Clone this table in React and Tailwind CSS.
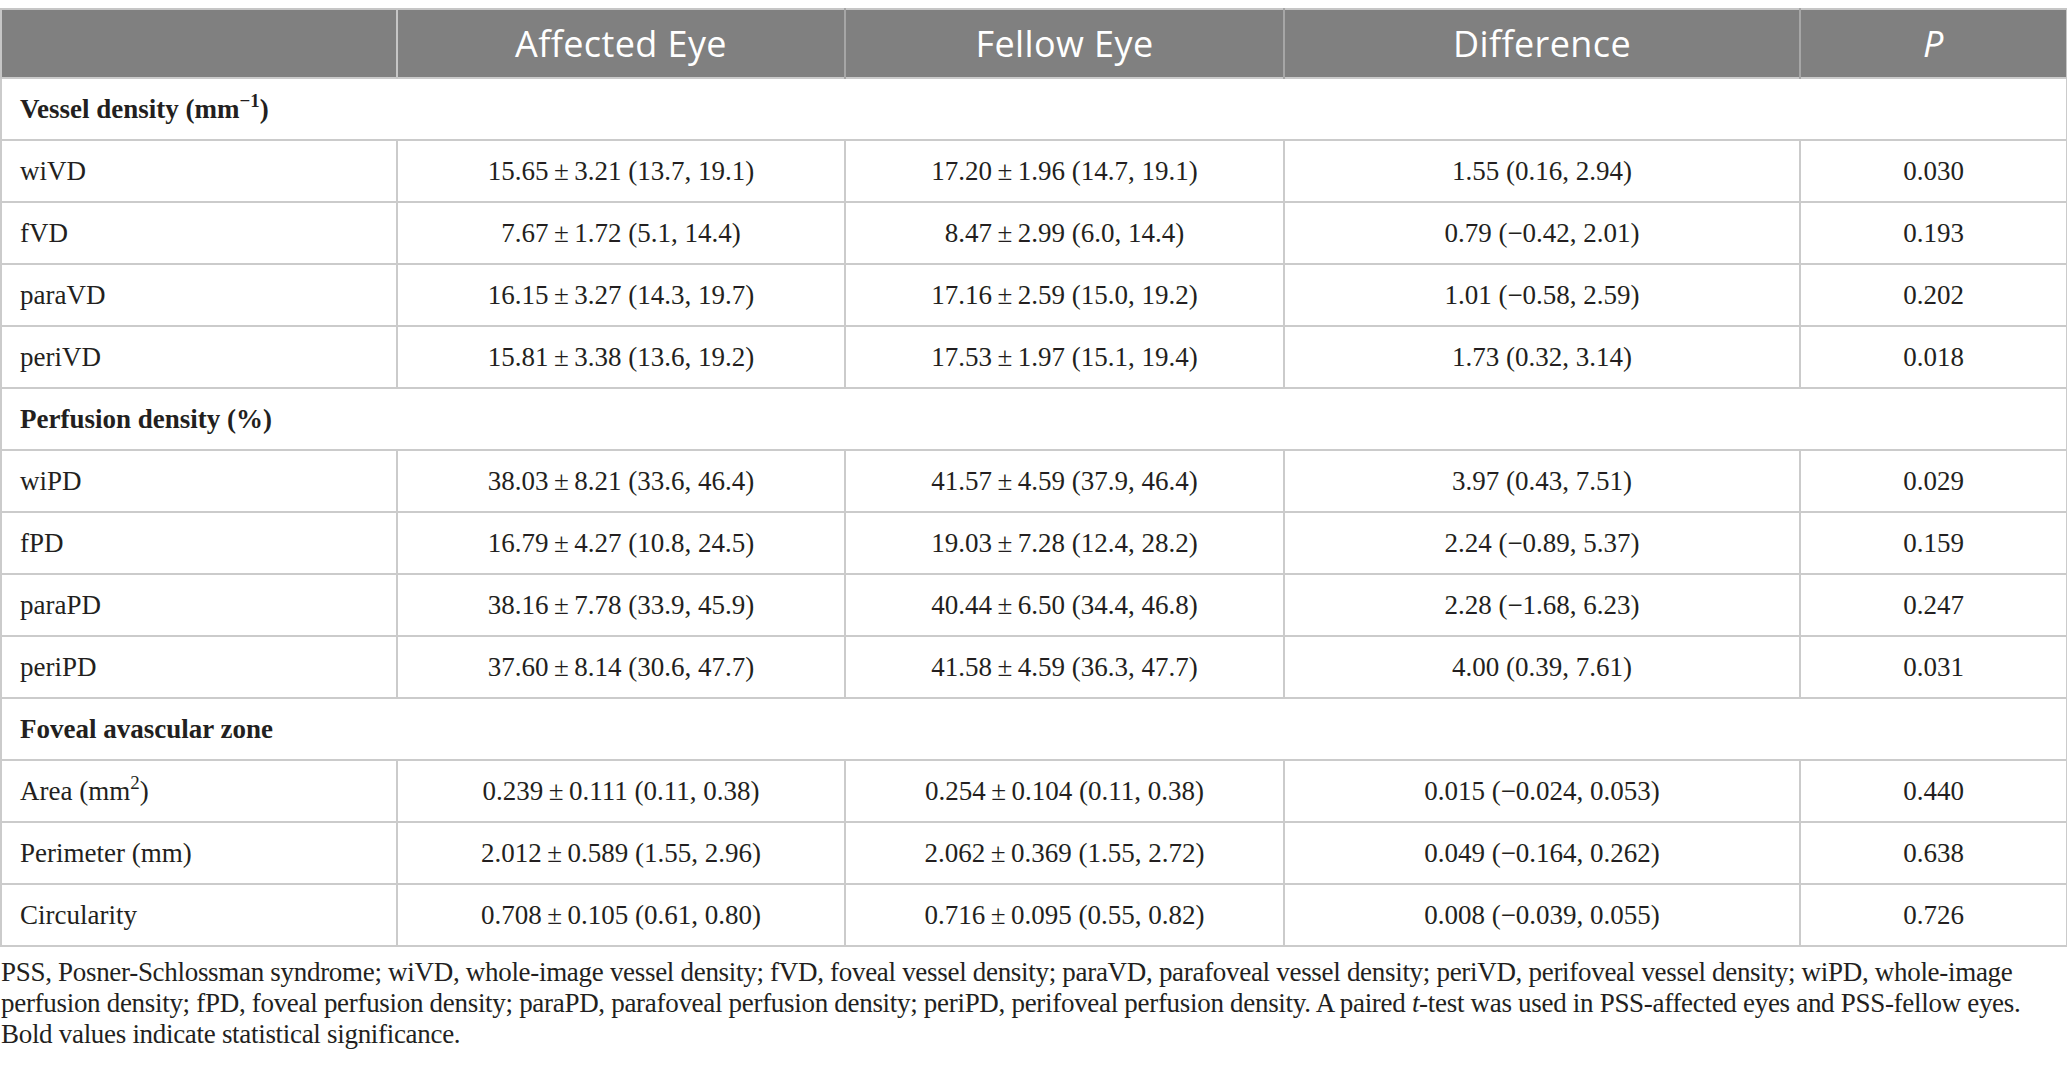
import React from "react";

const serif = { fontFamily: '"Liberation Serif", "Times New Roman", serif' };

const supCls = "text-[0.7em] relative -top-[0.55em] align-baseline";

const sections = [
  {
    title: (
      <>
        Vessel density (mm<sup className={supCls}>−1</sup>)
      </>
    ),
    rows: [
      ["wiVD", "15.65\u2009±\u20093.21 (13.7, 19.1)", "17.20\u2009±\u20091.96 (14.7, 19.1)", "1.55 (0.16, 2.94)", "0.030"],
      ["fVD", "7.67\u2009±\u20091.72 (5.1, 14.4)", "8.47\u2009±\u20092.99 (6.0, 14.4)", "0.79 (−0.42, 2.01)", "0.193"],
      ["paraVD", "16.15\u2009±\u20093.27 (14.3, 19.7)", "17.16\u2009±\u20092.59 (15.0, 19.2)", "1.01 (−0.58, 2.59)", "0.202"],
      ["periVD", "15.81\u2009±\u20093.38 (13.6, 19.2)", "17.53\u2009±\u20091.97 (15.1, 19.4)", "1.73 (0.32, 3.14)", "0.018"],
    ],
  },
  {
    title: <>Perfusion density (%)</>,
    rows: [
      ["wiPD", "38.03\u2009±\u20098.21 (33.6, 46.4)", "41.57\u2009±\u20094.59 (37.9, 46.4)", "3.97 (0.43, 7.51)", "0.029"],
      ["fPD", "16.79\u2009±\u20094.27 (10.8, 24.5)", "19.03\u2009±\u20097.28 (12.4, 28.2)", "2.24 (−0.89, 5.37)", "0.159"],
      ["paraPD", "38.16\u2009±\u20097.78 (33.9, 45.9)", "40.44\u2009±\u20096.50 (34.4, 46.8)", "2.28 (−1.68, 6.23)", "0.247"],
      ["periPD", "37.60\u2009±\u20098.14 (30.6, 47.7)", "41.58\u2009±\u20094.59 (36.3, 47.7)", "4.00 (0.39, 7.61)", "0.031"],
    ],
  },
  {
    title: <>Foveal avascular zone</>,
    rows: [
      [
        <>
          Area (mm<sup className={supCls}>2</sup>)
        </>,
        "0.239\u2009±\u20090.111 (0.11, 0.38)",
        "0.254\u2009±\u20090.104 (0.11, 0.38)",
        "0.015 (−0.024, 0.053)",
        "0.440",
      ],
      ["Perimeter (mm)", "2.012\u2009±\u20090.589 (1.55, 2.96)", "2.062\u2009±\u20090.369 (1.55, 2.72)", "0.049 (−0.164, 0.262)", "0.638"],
      ["Circularity", "0.708\u2009±\u20090.105 (0.61, 0.80)", "0.716\u2009±\u20090.095 (0.55, 0.82)", "0.008 (−0.039, 0.055)", "0.726"],
    ],
  },
];

export default function App() {
  return (
    <div className="w-[2067px] h-[1073px] bg-white text-[#231f20] overflow-hidden pt-[8px]" style={serif}>
      <table className="border-collapse table-fixed w-[2066px]">
        <colgroup>
          <col className="w-[396px]" />
          <col className="w-[448px]" />
          <col className="w-[439px]" />
          <col className="w-[516px]" />
          <col className="w-[267px]" />
        </colgroup>
        <thead>
          <tr
            className="h-[69px] bg-[#808080] text-white text-[36px] tracking-[0.4px] font-normal"
            style={{ fontFamily: '"Open Sans", "Noto Sans", sans-serif' }}
          >
            <th className="border-2 border-[#c6c6c6] border-b-0"></th>
            <th className="border-2 border-[#a6a6a6] border-t-[#c6c6c6] border-b-0 font-normal">Affected Eye</th>
            <th className="border-2 border-[#a6a6a6] border-t-[#c6c6c6] border-b-0 font-normal">Fellow Eye</th>
            <th className="border-2 border-[#a6a6a6] border-t-[#c6c6c6] border-b-0 font-normal">Difference</th>
            <th className="border-2 border-[#a6a6a6] border-t-[#c6c6c6] border-r-[#c6c6c6] border-b-0 font-normal italic">P</th>
          </tr>
        </thead>
        <tbody className="text-[27px]">
          {sections.map((s, si) => (
            <React.Fragment key={si}>
              <tr className="h-[62px]">
                <td colSpan={5} className="border-2 border-[#cbcbcb] pl-[18px] font-bold text-left">
                  {s.title}
                </td>
              </tr>
              {s.rows.map((r, ri) => (
                <tr key={ri} className="h-[62px]">
                  <td className="border-2 border-[#cbcbcb] pl-[18px] text-left">{r[0]}</td>
                  <td className="border-2 border-[#cbcbcb] text-center">{r[1]}</td>
                  <td className="border-2 border-[#cbcbcb] text-center">{r[2]}</td>
                  <td className="border-2 border-[#cbcbcb] text-center">{r[3]}</td>
                  <td className="border-2 border-[#cbcbcb] text-center">{r[4]}</td>
                </tr>
              ))}
            </React.Fragment>
          ))}
        </tbody>
      </table>
      <div className="text-[27px] leading-[31px] tracking-[-0.3px] pt-[10px] pl-[1px] whitespace-nowrap">
        <div>
          PSS, Posner-Schlossman syndrome; wiVD, whole-image vessel density; fVD, foveal vessel density; paraVD, parafoveal vessel density; periVD, perifoveal vessel density; wiPD, whole-image
        </div>
        <div>
          perfusion density; fPD, foveal perfusion density; paraPD, parafoveal perfusion density; periPD, perifoveal perfusion density. A paired <i>t</i>-test was used in PSS-affected eyes and PSS-fellow eyes.
        </div>
        <div>Bold values indicate statistical significance.</div>
      </div>
    </div>
  );
}
